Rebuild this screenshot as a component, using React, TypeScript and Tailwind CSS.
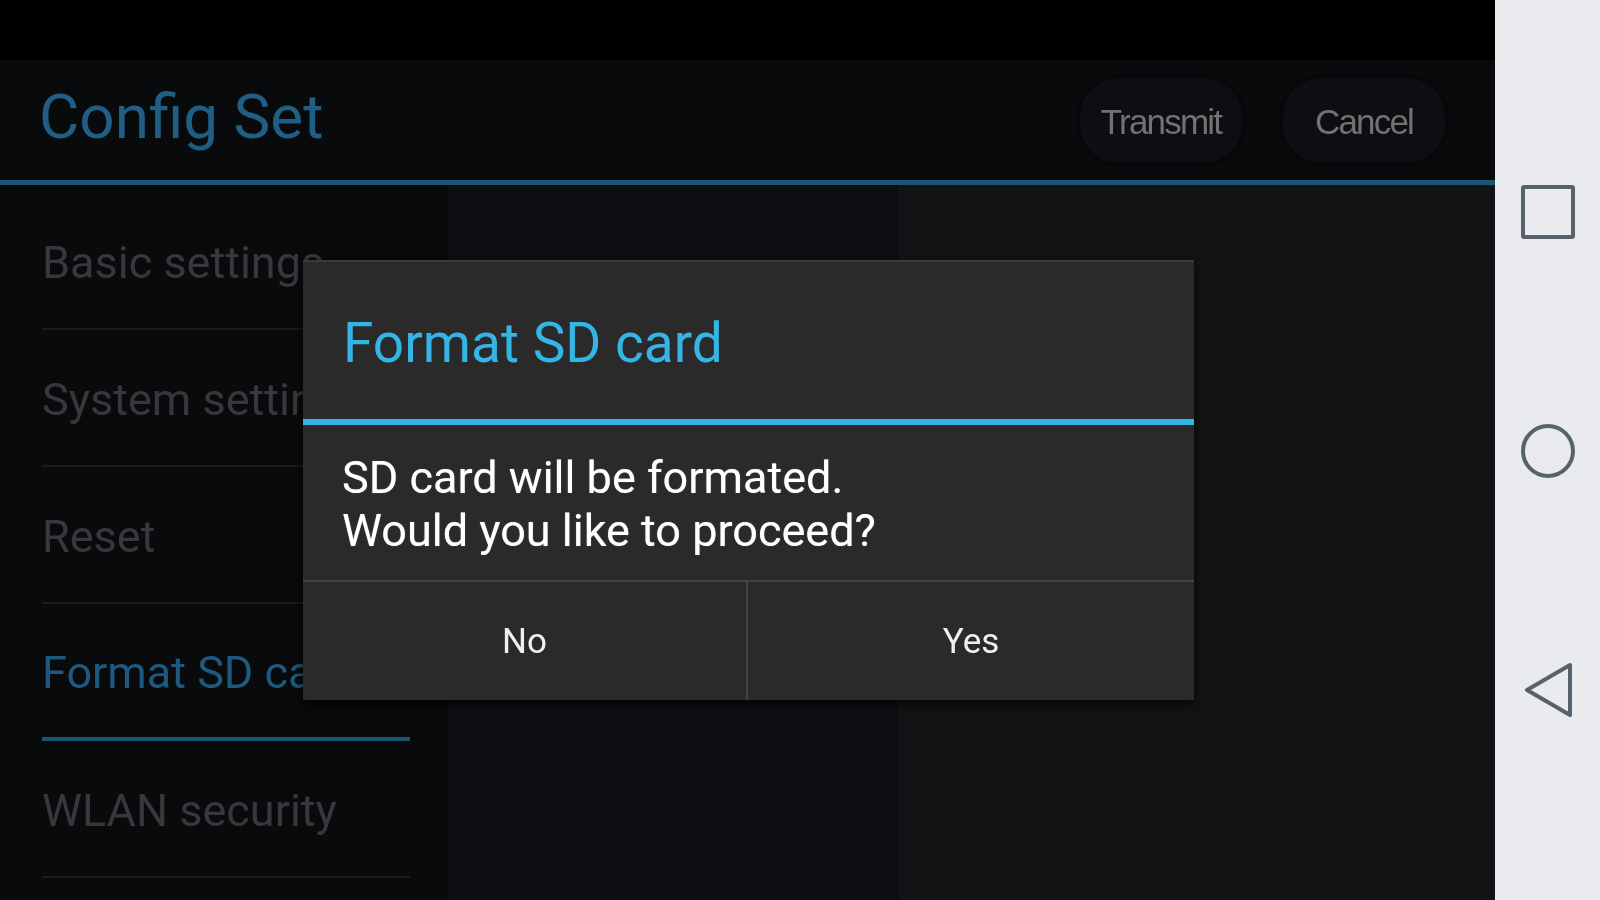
const menuItems = [
  { label: 'Basic settings' },
  { label: 'System settings' },
  { label: 'Reset' },
  { label: 'Format SD card', active: true },
  { label: 'WLAN security' },
];

const roboto = 'font-["Roboto",sans-serif]';

function HeaderButton({ label }: { label: string }) {
  return (
    <button className="flex h-[85px] w-[162px] items-center justify-center rounded-[38px] bg-[#0d0e11] shadow-[0_0_3px_2px_#060708]">
      <span className="pt-[4px] font-['Liberation_Sans',sans-serif] text-[35px] tracking-[-1.8px] text-[#727272] blur-[0.6px]">{label}</span>
    </button>
  );
}

export default function App() {
  return (
    <div className={`relative flex h-[900px] w-[1600px] overflow-hidden bg-black ${roboto}`}>
      <div className="flex w-[1495px] flex-col">
        <div className="h-[60px] bg-black" />
        <header className="flex h-[120px] items-center justify-between bg-[#090a0c] pl-[39px] pr-[50px]">
          <h1 className="pb-[6px] text-[62px] leading-none text-[#1f5f85] blur-[0.6px]">Config Set</h1>
          <div className="flex gap-[41px]">
            <HeaderButton label="Transmit" />
            <HeaderButton label="Cancel" />
          </div>
        </header>
        <div className="h-[5px] bg-[#1a5575]" />
        <div className="flex flex-1">
          <nav className="w-[450px] border-r border-[#15171a] bg-[#090a0c] pl-[42px] pr-[39px] pt-[8px]">
            {menuItems.map((item) => (
              <div
                key={item.label}
                className={`flex h-[137px] items-center pt-[4px] text-[45px] leading-none ${
                  item.active ? 'border-b-[4px] border-[#1a5575] text-[#1d5a80]' : 'border-b-2 border-[#1a1b1e] text-[#36383b]'
                }`}
              >
                <span className="blur-[0.6px]">{item.label}</span>
              </div>
            ))}
          </nav>
          <div className="w-[450px] border-r border-[#15171a] bg-[#0c0e11]" />
          <div className="flex-1 bg-[#111315]" />
        </div>
      </div>

      <aside className="flex w-[105px] flex-col items-center gap-[185px] bg-[#e9ebee] pt-[185px]">
        <svg width="54" height="54" viewBox="0 0 54 54" fill="none" stroke="#56636d" strokeWidth="4" className="ml-[1px] blur-[0.4px]">
          <rect x="2" y="2" width="50" height="50" rx="1" />
        </svg>
        <svg width="54" height="54" viewBox="0 0 54 54" fill="none" stroke="#56636d" strokeWidth="4" className="ml-[1px] blur-[0.4px]">
          <circle cx="27" cy="27" r="25" />
        </svg>
        <svg width="50" height="54" viewBox="0 0 50 54" fill="none" stroke="#56636d" strokeWidth="4" className="ml-[3px] blur-[0.4px]">
          <path d="M46 2 L3 27 L46 52 Z" strokeLinejoin="round" />
        </svg>
      </aside>

      <div className="absolute left-[303px] top-[260px] flex h-[440px] w-[891px] flex-col bg-[#2a2a2a] shadow-[0_4px_10px_rgba(0,0,0,0.7)]">
        <div className="flex h-[159px] items-center border-t-2 border-[#3a3a3a] pl-[40px] pt-[5px] text-[55px] leading-none text-[#35b5e5]">
          <span className="blur-[0.5px]">Format SD card</span>
        </div>
        <div className="h-[6px] bg-[#35b5e5]" />
        <div className="flex h-[155px] flex-col justify-center pl-[39px] pt-[3px] text-[45px] leading-[53px] text-white [text-shadow:0_0_1px_rgba(255,255,255,0.5)]">
          <p className="blur-[0.5px]">SD card will be formated.</p>
          <p className="blur-[0.5px]">Would you like to proceed?</p>
        </div>
        <div className="flex flex-1 border-t-2 border-[#444444] text-[35px] text-[#f0f0f0] [text-shadow:0_0_1px_rgba(255,255,255,0.5)]">
          <button className="w-[445px] border-r-2 border-[#444444] pt-[3px]"><span className="blur-[0.5px]">No</span></button>
          <button className="flex-1 pt-[3px]"><span className="blur-[0.5px]">Yes</span></button>
        </div>
      </div>
    </div>
  );
}
